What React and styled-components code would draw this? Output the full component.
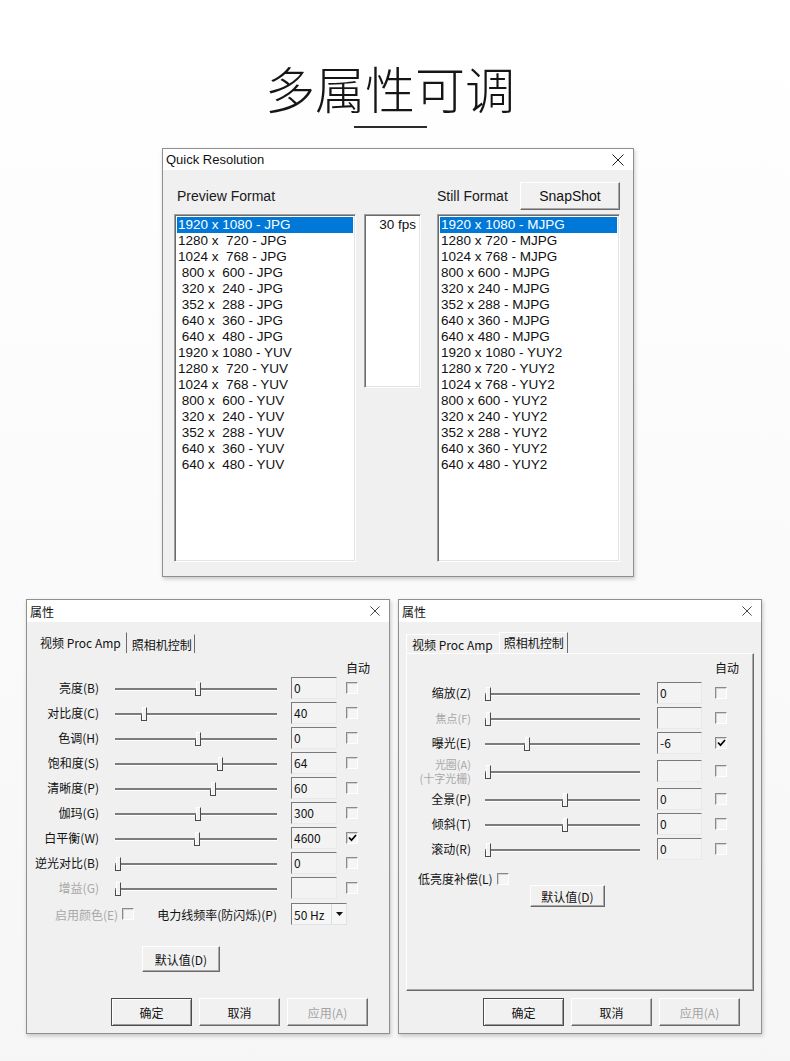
import React from "react";
import styled, { createGlobalStyle } from "styled-components";

const UI_FONT = `"Noto Sans CJK SC", "Noto Sans", sans-serif`;
const EN_FONT = `"Liberation Sans", Arial, sans-serif`;

const GlobalStyle = createGlobalStyle`
  html, body { margin: 0; padding: 0; }
  body { background: #fafafa; font-family: ${UI_FONT}; }
  #root { width: 790px; }
`;

const Page = styled.main`
  width: 790px;
  height: 1061px;
  overflow: hidden;
  background: linear-gradient(#ffffff 0%, #f6f6f6 100%);
  display: flex;
  flex-direction: column;
`;

const Header = styled.header`
  width: 780px;
  padding-top: 58px;
  display: flex;
  flex-direction: column;
  align-items: center;
`;

const Title = styled.h1`
  margin: 0;
  font-family: ${UI_FONT};
  font-weight: 300;
  font-size: 50px;
  line-height: 58px;
  color: #151515;
`;

const Rule = styled.div`
  width: 73px;
  height: 2px;
  margin-top: 10px;
  background: #2b2b2b;
`;

const Window = styled.section`
  box-sizing: border-box;
  flex: none;
  width: ${(p) => p.$w}px;
  height: ${(p) => p.$h}px;
  border: 1px solid #8f8f8f;
  background: #f0f0f0;
  display: flex;
  flex-direction: column;
  box-shadow: 1px 2px 4px rgba(0, 0, 0, 0.2);
`;

const QuickWindow = styled(Window)`
  margin: 20px 0 0 162px;
`;

const TitleBar = styled.div`
  flex: none;
  height: ${(p) => p.$h}px;
  background: #ffffff;
  display: flex;
  align-items: center;
  justify-content: space-between;
  padding: 0 ${(p) => p.$pr}px 0 3px;
  font-family: ${(p) => (p.$en ? EN_FONT : UI_FONT)};
  font-size: ${(p) => (p.$en ? 13 : 12)}px;
  color: #111;
`;

const CloseGlyph = ({ size }) => (
  <svg width={size} height={size} viewBox="0 0 12 12">
    <path d="M0.5 0.5 L11.5 11.5 M11.5 0.5 L0.5 11.5" stroke="#222" strokeWidth="1" fill="none" />
  </svg>
);

/* ---------- Quick Resolution ---------- */

const QuickBody = styled.div`
  flex: 1;
  display: grid;
  grid-template-columns: 182px 65px 183px;
  grid-template-rows: 28px 348px;
  column-gap: 8px;
  row-gap: 4px;
  padding: 12px 0 0 11px;
  align-items: start;
`;

const FormatLabel = styled.div`
  align-self: center;
  padding-left: ${(p) => p.$pl || 0}px;
  font-family: ${EN_FONT};
  font-size: 14px;
  color: #1a1a1a;
  white-space: nowrap;
`;

const StillHeader = styled.div`
  display: flex;
  align-items: center;
  justify-content: space-between;
  height: 28px;
`;

const ListBox = styled.ul`
  list-style: none;
  margin: 0;
  box-sizing: border-box;
  width: ${(p) => p.$w}px;
  height: ${(p) => p.$h}px;
  padding: 2px 2px 0 2px;
  background: #ffffff;
  border: 1px solid;
  border-color: #a0a0a0 #ffffff #ffffff #a0a0a0;
  box-shadow: inset 1px 1px 0 #6a6a6a, inset -1px -1px 0 #e3e3e3;
  overflow: hidden;
  font-family: ${EN_FONT};
  font-size: 13.5px;
  line-height: 16px;
  color: #111;
  text-align: ${(p) => (p.$right ? "right" : "left")};
`;

const ListItem = styled.li`
  height: 16px;
  padding: 0 ${(p) => (p.$pr ? 2 : 0)}px 0 1px;
  white-space: pre;
  background: ${(p) => (p.$selected ? "#0078d7" : "transparent")};
  color: ${(p) => (p.$selected ? "#ffffff" : "#111")};
`;

const PushButton = styled.button`
  box-sizing: border-box;
  flex: none;
  width: ${(p) => p.$w}px;
  height: ${(p) => p.$h}px;
  padding: 0;
  margin: ${(p) => p.$mt || 0}px 0 0 ${(p) => p.$ml || 0}px;
  background: #f1f1f1;
  font-family: ${(p) => (p.$en ? EN_FONT : UI_FONT)};
  font-size: ${(p) => p.$fs || 12}px;
  color: ${(p) => (p.$dim ? "#a3a3a3" : "#111")};
  border: 1px solid;
  border-color: ${(p) => (p.$primary ? "#4c4c4c" : "#ffffff #6a6a6a #6a6a6a #ffffff")};
  box-shadow: ${(p) =>
    p.$primary
      ? "inset 1px 1px 0 #ffffff, inset -1px -1px 0 #9a9a9a"
      : "inset -1px -1px 0 #a8a8a8"};
  cursor: default;
`;

/* ---------- Property dialogs ---------- */

const DialogRow = styled.div`
  display: flex;
  gap: 8px;
  margin: 22px 0 0 26px;
`;

const DialogBody = styled.div`
  flex: 1;
  display: flex;
  flex-direction: column;
  padding: 10px 7px 7px;
`;

const TabStrip = styled.div`
  flex: none;
  height: 21px;
  display: flex;
  align-items: flex-end;
`;

const Tab = styled.div`
  box-sizing: border-box;
  height: ${(p) => (p.$active ? 21 : 19)}px;
  display: flex;
  align-items: center;
  padding: 0 ${(p) => p.$pr}px ${(p) => (p.$active ? 2 : 0)}px ${(p) => p.$pl}px;
  border-left: 1px solid ${(p) => (p.$framed ? "#ffffff" : "transparent")};
  border-top: 1px solid ${(p) => (p.$framed ? "#ffffff" : "transparent")};
  border-right: 1px solid ${(p) => (p.$edge ? "#6a6a6a" : "transparent")};
  font-size: 12px;
  color: #111;
  white-space: nowrap;
`;

const TabFrame = styled.div`
  flex: 1;
  display: flex;
  flex-direction: column;
  border: 1px solid;
  border-color: ${(p) => (p.$visible ? "#ffffff #6a6a6a #6a6a6a #ffffff" : "transparent")};
  box-shadow: ${(p) => (p.$visible ? "inset -1px -1px 0 #a8a8a8" : "none")};
`;

const AutoHeader = styled.div`
  height: ${(p) => p.$h}px;
  box-sizing: border-box;
  padding: 6px 0 0 ${(p) => p.$ml}px;
  font-size: 12px;
  line-height: 16px;
  color: #111;
`;

const PropRow = styled.div`
  height: ${(p) => (p.$tall ? 31 : 25)}px;
  display: flex;
  align-items: center;
`;

const PropLabel = styled.div`
  flex: none;
  width: 64px;
  display: flex;
  flex-direction: column;
  align-items: flex-end;
  font-size: ${(p) => (p.$small ? 11 : 12)}px;
  line-height: ${(p) => (p.$tall ? 14 : 16)}px;
  color: ${(p) => (p.$dim ? "#a8a8a8" : "#111")};
  white-space: nowrap;
`;

const LabelLine = styled.span`
  display: block;
  height: 14px;
  overflow: visible;
`;

const Slider = styled.div`
  position: relative;
  flex: none;
  width: ${(p) => p.$w}px;
  height: 16px;
  margin-left: ${(p) => p.$ml}px;
  &::before {
    content: "";
    position: absolute;
    left: 0;
    right: 0;
    top: 8px;
    height: 2px;
    background: #7c7c7c;
    border-bottom: 1px solid #ffffff;
  }
`;

const Thumb = styled.span`
  position: absolute;
  top: 2px;
  box-sizing: border-box;
  width: 5px;
  height: 14px;
  background: #f2f2f2;
  border: 1px solid;
  border-color: #ffffff #4a4a4a #4a4a4a #ffffff;
  &::after {
    content: "";
    position: absolute;
    left: -2px;
    bottom: -1px;
    width: 2px;
    height: 5px;
    border-bottom: 1px solid #4a4a4a;
    border-left: 1px solid #4a4a4a;
  }
`;

const EditBox = styled.div`
  flex: none;
  box-sizing: border-box;
  width: ${(p) => p.$w}px;
  height: 22px;
  margin-left: ${(p) => p.$ml}px;
  padding-left: 2px;
  display: flex;
  align-items: center;
  background: #f3f3f3;
  border: 1px solid;
  border-color: #7a7a7a #e9e9e9 #e9e9e9 #7a7a7a;
  font-size: 12px;
  color: #111;
`;

const CheckBox = styled.span`
  flex: none;
  box-sizing: border-box;
  width: 12px;
  height: 12px;
  margin-left: ${(p) => p.$ml || 0}px;
  display: inline-flex;
  align-items: center;
  justify-content: center;
  background: #f5f5f5;
  border: 1px solid;
  border-color: #8a8a8a #ffffff #ffffff #8a8a8a;
  box-shadow: inset 1px 1px 0 #d2d2d2;
`;

const CheckMark = () => (
  <svg width="9" height="8" viewBox="0 0 9 8">
    <path d="M1 3.5 L3.5 6.2 L8 1" stroke="#000" strokeWidth="1.7" fill="none" />
  </svg>
);

const ExtraRow = styled.div`
  display: flex;
  align-items: center;
  margin-top: 3px;
  height: 22px;
`;

const ExtraGroup = styled.div`
  flex: none;
  width: ${(p) => p.$w}px;
  box-sizing: border-box;
  padding-left: 20px;
  display: flex;
  align-items: center;
  justify-content: space-between;
`;

const InlineField = styled.span`
  display: inline-flex;
  align-items: center;
  gap: 4px;
  font-size: 12px;
  color: ${(p) => (p.$dim ? "#a8a8a8" : "#111")};
  white-space: nowrap;
`;

const Combo = styled.div`
  flex: none;
  box-sizing: border-box;
  width: 56px;
  height: 22px;
  margin-left: 14px;
  display: flex;
  align-items: center;
  padding-left: 2px;
  background: #f6f6f6;
  border: 1px solid;
  border-color: #7a7a7a #e2e2e2 #e2e2e2 #7a7a7a;
  font-size: 12px;
  color: #111;
`;

const ComboArrow = styled.span`
  margin-left: auto;
  width: 14px;
  height: 100%;
  display: flex;
  align-items: center;
  justify-content: center;
  border-left: 1px solid #dcdcdc;
`;

const LowRow = styled.div`
  margin-top: 11px;
  height: 13px;
  padding-left: 11px;
  display: flex;
  align-items: center;
`;

const Footer = styled.div`
  flex: none;
  display: flex;
  justify-content: flex-end;
  gap: 7px;
  margin-top: 7px;
  padding-right: 14px;
`;

/* ---------- data ---------- */

const previewFormats = [
  "1920 x 1080 - JPG",
  "1280 x  720 - JPG",
  "1024 x  768 - JPG",
  " 800 x  600 - JPG",
  " 320 x  240 - JPG",
  " 352 x  288 - JPG",
  " 640 x  360 - JPG",
  " 640 x  480 - JPG",
  "1920 x 1080 - YUV",
  "1280 x  720 - YUV",
  "1024 x  768 - YUV",
  " 800 x  600 - YUV",
  " 320 x  240 - YUV",
  " 352 x  288 - YUV",
  " 640 x  360 - YUV",
  " 640 x  480 - YUV",
];

const stillFormats = [
  "1920 x 1080 - MJPG",
  "1280 x 720 - MJPG",
  "1024 x 768 - MJPG",
  "800 x 600 - MJPG",
  "320 x 240 - MJPG",
  "352 x 288 - MJPG",
  "640 x 360 - MJPG",
  "640 x 480 - MJPG",
  "1920 x 1080 - YUY2",
  "1280 x 720 - YUY2",
  "1024 x 768 - YUY2",
  "800 x 600 - YUY2",
  "320 x 240 - YUY2",
  "352 x 288 - YUY2",
  "640 x 360 - YUY2",
  "640 x 480 - YUY2",
];

const procAmp = [
  { label: "亮度(B)", pos: 83, value: "0" },
  { label: "对比度(C)", pos: 29, value: "40" },
  { label: "色调(H)", pos: 83, value: "0" },
  { label: "饱和度(S)", pos: 105, value: "64" },
  { label: "清晰度(P)", pos: 98, value: "60" },
  { label: "伽玛(G)", pos: 83, value: "300" },
  { label: "白平衡(W)", pos: 82, value: "4600", checked: true },
  { label: "逆光对比(B)", pos: 3, value: "0" },
  { label: "增益(G)", pos: 3, value: "", dim: true },
];

const camera = [
  { label: "缩放(Z)", pos: 3, value: "0" },
  { label: "焦点(F)", pos: 3, value: "", dim: true, small: true },
  { label: "曝光(E)", pos: 42, value: "-6", checked: true },
  { label: ["光圈(A)", "(十字光栅)"], pos: 3, value: "", dim: true, tall: true, small: true },
  { label: "全景(P)", pos: 80, value: "0" },
  { label: "倾斜(T)", pos: 80, value: "0" },
  { label: "滚动(R)", pos: 3, value: "0" },
];

const leftCfg = { g1: 16, slider: 162, g2: 14, edit: 46, g3: 9 };
const rightCfg = { g1: 14, slider: 155, g2: 17, edit: 45, g3: 13 };

const autoOffset = (c) => 64 + c.g1 + c.slider + c.g2 + c.edit + c.g3;

function Row({ item, cfg }) {
  const lines = Array.isArray(item.label) ? item.label : [item.label];
  return (
    <PropRow $tall={item.tall}>
      <PropLabel $dim={item.dim} $tall={item.tall} $small={item.small}>
        {lines.length > 1
          ? lines.map((l) => <LabelLine key={l}>{l}</LabelLine>)
          : lines[0]}
      </PropLabel>
      <Slider $w={cfg.slider} $ml={cfg.g1}>
        <Thumb style={{ left: `${item.pos - 2}px` }} />
      </Slider>
      <EditBox $w={cfg.edit} $ml={cfg.g2}>
        {item.value}
      </EditBox>
      <CheckBox $ml={cfg.g3}>{item.checked && <CheckMark />}</CheckBox>
    </PropRow>
  );
}

function DialogFooter() {
  return (
    <Footer>
      <PushButton $w={81} $h={28} $primary>
        确定
      </PushButton>
      <PushButton $w={81} $h={28}>
        取消
      </PushButton>
      <PushButton $w={81} $h={28} $dim>
        应用(A)
      </PushButton>
    </Footer>
  );
}

function PropertyWindowTitle() {
  return (
    <TitleBar $h={22} $pr={9}>
      <span>属性</span>
      <CloseGlyph size={10} />
    </TitleBar>
  );
}

export default function App() {
  return (
    <>
      <GlobalStyle />
      <Page>
        <Header>
          <Title>多属性可调</Title>
          <Rule />
        </Header>

        <QuickWindow $w={472} $h={429}>
          <TitleBar $h={21} $pr={9} $en>
            <span>Quick Resolution</span>
            <CloseGlyph size={12} />
          </TitleBar>
          <QuickBody>
            <FormatLabel $pl={3}>Preview Format</FormatLabel>
            <div />
            <StillHeader>
              <FormatLabel>Still Format</FormatLabel>
              <PushButton $w={100} $h={28} $en $fs={14}>
                SnapShot
              </PushButton>
            </StillHeader>
            <ListBox $w={182} $h={348}>
              {previewFormats.map((f, i) => (
                <ListItem key={i} $selected={i === 0}>
                  {f}
                </ListItem>
              ))}
            </ListBox>
            <ListBox $w={57} $h={174} $right>
              <ListItem $pr>30 fps</ListItem>
            </ListBox>
            <ListBox $w={183} $h={348}>
              {stillFormats.map((f, i) => (
                <ListItem key={i} $selected={i === 0}>
                  {f}
                </ListItem>
              ))}
            </ListBox>
          </QuickBody>
        </QuickWindow>

        <DialogRow>
          <Window $w={364} $h={435}>
            <PropertyWindowTitle />
            <DialogBody>
              <TabStrip>
                <Tab $active $edge $pl={5} $pr={5}>
                  视频 Proc Amp
                </Tab>
                <Tab $edge $pl={4} $pr={2}>
                  照相机控制
                </Tab>
              </TabStrip>
              <TabFrame>
                <AutoHeader $h={21} $ml={autoOffset(leftCfg)}>
                  自动
                </AutoHeader>
                {procAmp.map((item) => (
                  <Row key={item.label} item={item} cfg={leftCfg} />
                ))}
                <ExtraRow>
                  <ExtraGroup $w={64 + leftCfg.g1 + leftCfg.slider}>
                    <InlineField $dim>
                      启用颜色(E)
                      <CheckBox />
                    </InlineField>
                    <InlineField>电力线频率(防闪烁)(P)</InlineField>
                  </ExtraGroup>
                  <Combo>
                    50 Hz
                    <ComboArrow>
                      <svg width="7" height="4" viewBox="0 0 7 4">
                        <path d="M0 0 H7 L3.5 4 Z" fill="#111" />
                      </svg>
                    </ComboArrow>
                  </Combo>
                </ExtraRow>
                <PushButton $w={78} $h={26} $ml={107} $mt={21}>
                  默认值(D)
                </PushButton>
              </TabFrame>
              <DialogFooter />
            </DialogBody>
          </Window>

          <Window $w={364} $h={435}>
            <PropertyWindowTitle />
            <DialogBody>
              <TabStrip>
                <Tab $framed $pl={5} $pr={5}>
                  视频 Proc Amp
                </Tab>
                <Tab $active $framed $edge $pl={4} $pr={3}>
                  照相机控制
                </Tab>
              </TabStrip>
              <TabFrame $visible>
                <AutoHeader $h={26} $ml={autoOffset(rightCfg)}>
                  自动
                </AutoHeader>
                {camera.map((item) => (
                  <Row key={String(item.label)} item={item} cfg={rightCfg} />
                ))}
                <LowRow>
                  <InlineField>
                    低亮度补偿(L)
                    <CheckBox />
                  </InlineField>
                </LowRow>
                <PushButton $w={75} $h={22} $ml={123}>
                  默认值(D)
                </PushButton>
              </TabFrame>
              <DialogFooter />
            </DialogBody>
          </Window>
        </DialogRow>
      </Page>
    </>
  );
}
